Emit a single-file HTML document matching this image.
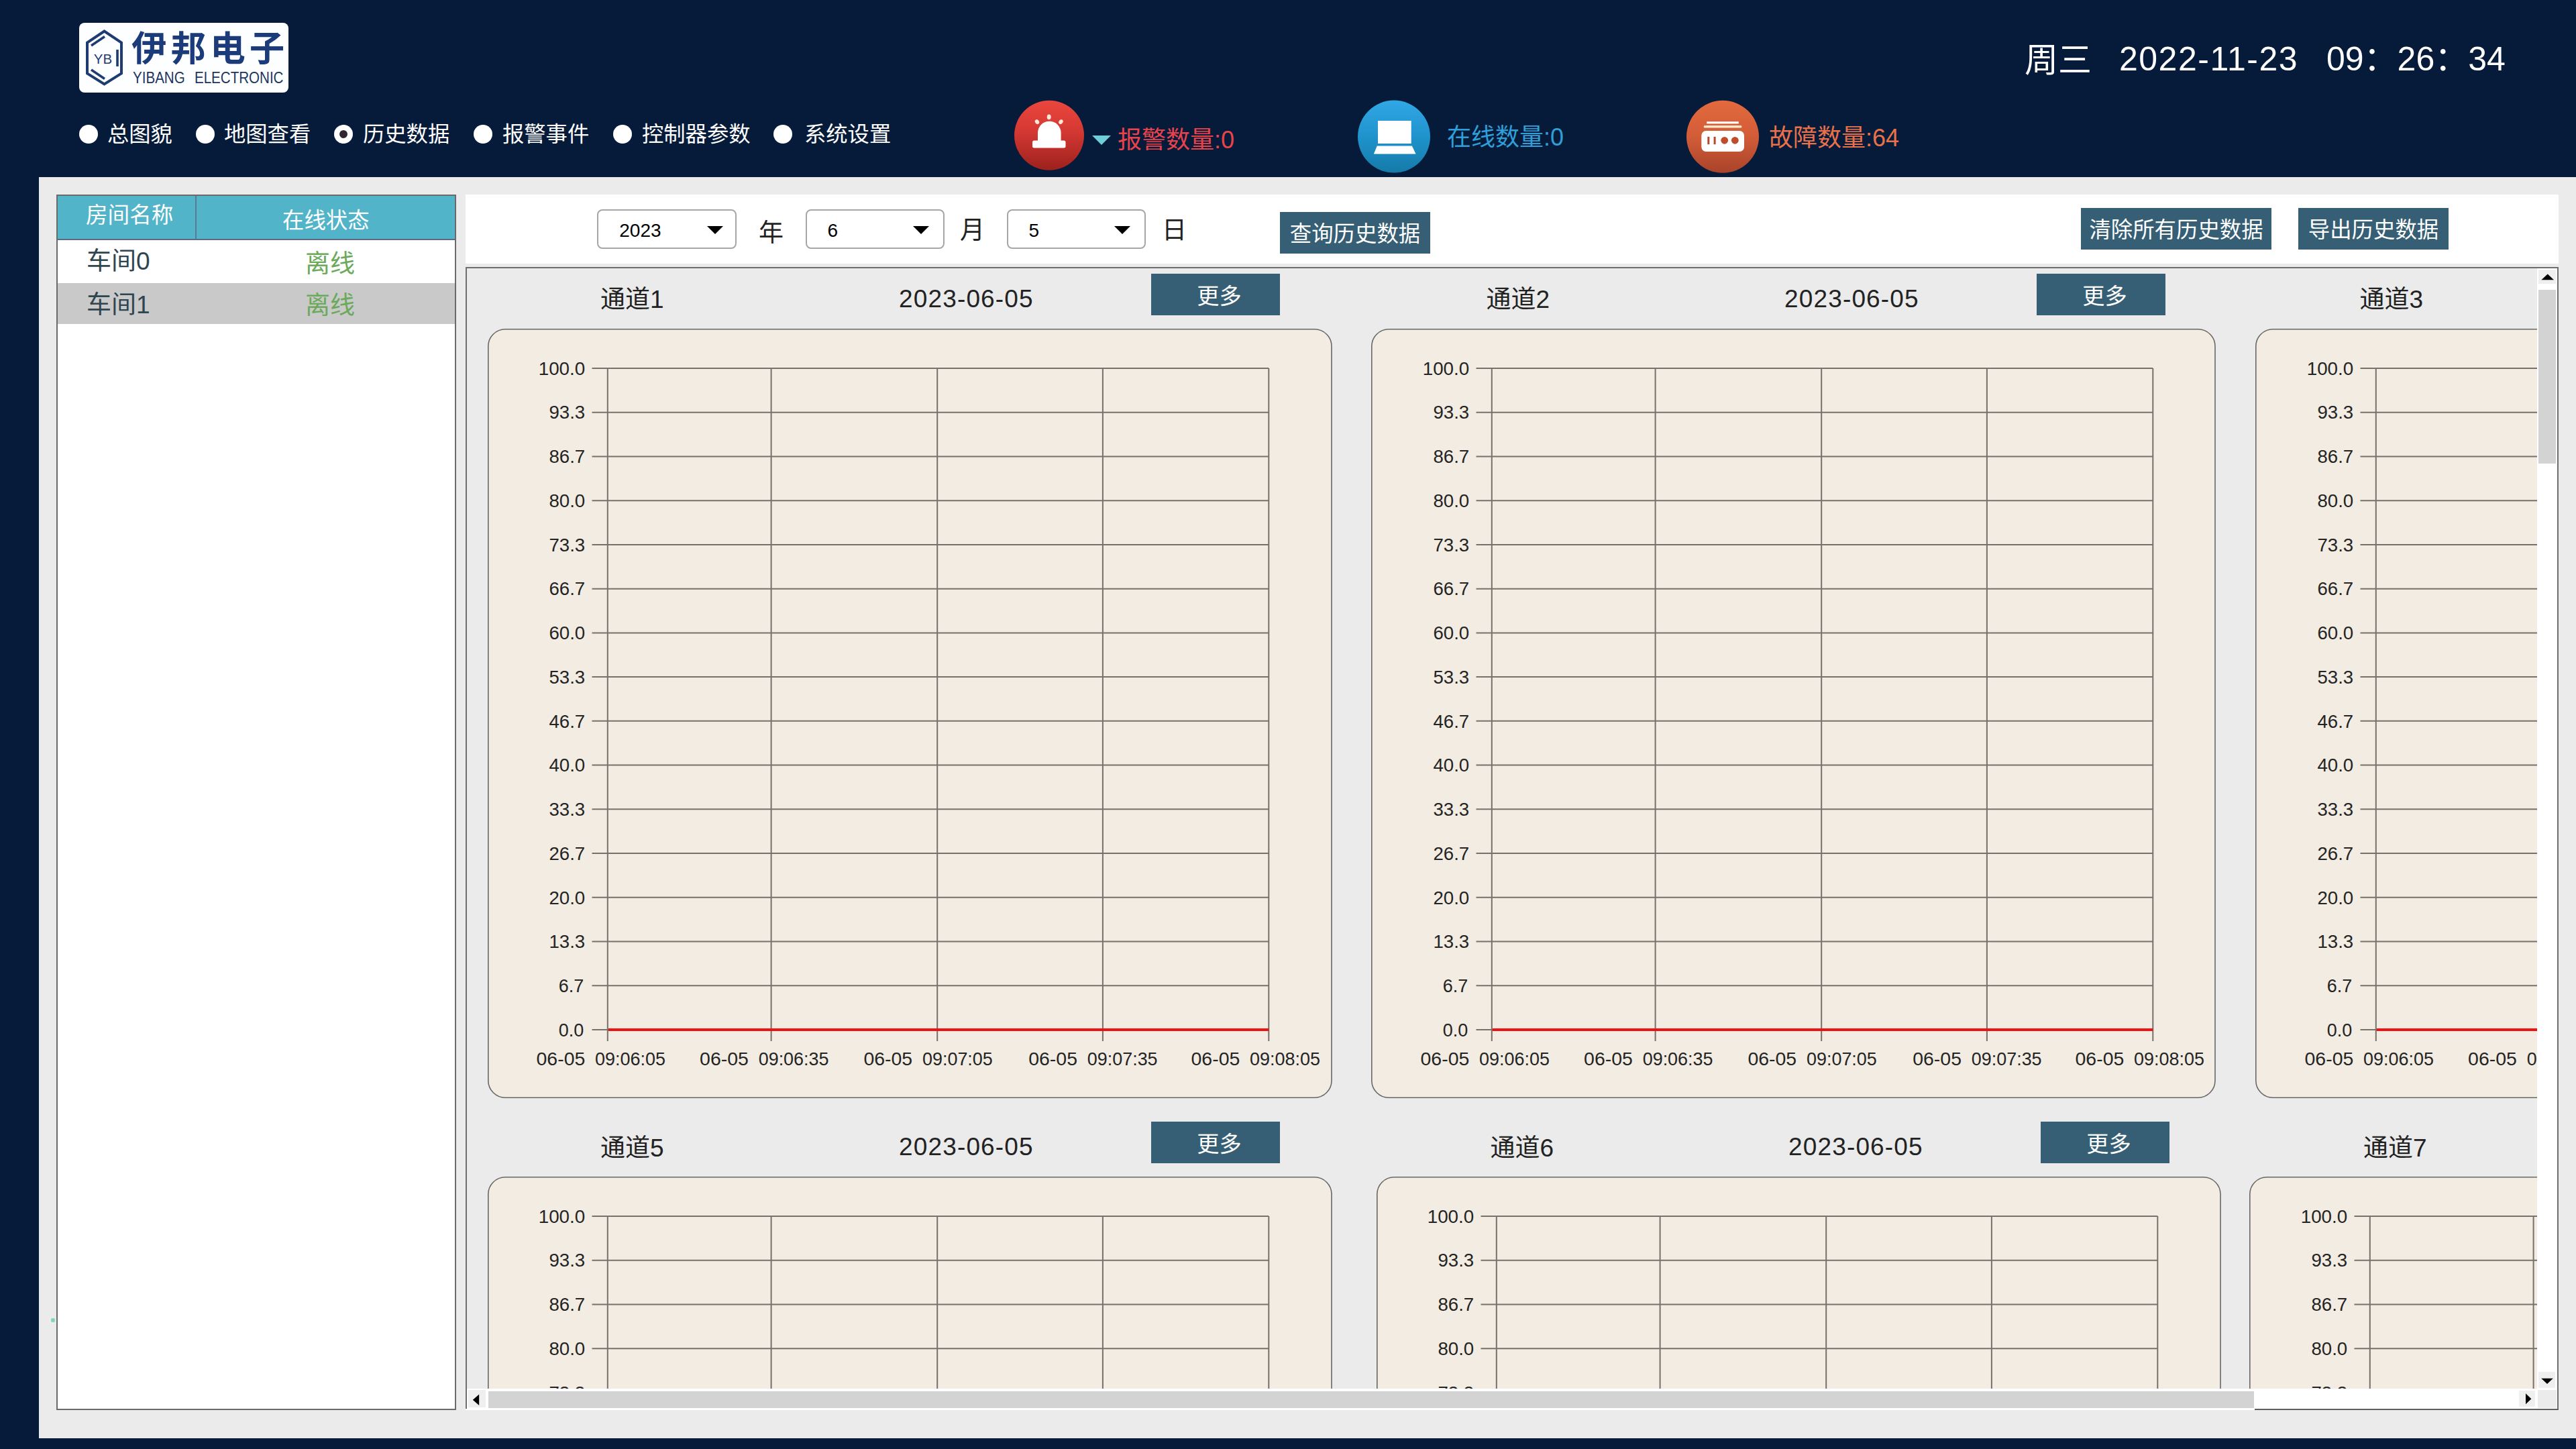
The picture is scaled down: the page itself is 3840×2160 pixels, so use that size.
<!DOCTYPE html>
<html lang="zh-CN"><head><meta charset="utf-8"><title>历史数据</title>
<style>
html,body{margin:0;padding:0}
body{width:3840px;height:2160px;background:#061b3a;position:relative;overflow:hidden;font-family:"Liberation Sans","Noto Sans CJK SC",sans-serif;}
.a{position:absolute;white-space:pre;line-height:1}
.nav{color:#fff;font-size:32.3px}
.radio{position:absolute;width:28px;height:28px;border-radius:50%;background:#fff}
.radio.on::after{content:"";position:absolute;left:8px;top:8px;width:12px;height:12px;border-radius:50%;background:#2f2730}
.btn{position:absolute;background:#365f75;color:#fff;font-size:32px;text-align:center}
.sel{position:absolute;box-sizing:border-box;border:2px solid #a6a6a6;border-radius:8px;background:#fff;width:207.5px;height:59px;top:312px}
.sel span{position:absolute;left:31px;top:14px;font-size:28px;line-height:32px;color:#000}
.sel i{position:absolute;right:18px;top:23px;width:0;height:0;border-left:12px solid transparent;border-right:12px solid transparent;border-top:12px solid #000}
.tl{color:#222;font-size:37px}
.panel{position:absolute;box-sizing:border-box;width:1259px;height:1147px;background:#f2ece2;border:2px solid #6c6c6c;border-radius:26px}
svg text{font-family:"Liberation Sans","Noto Sans CJK SC",sans-serif;}
</style></head><body>

<div class="a" style="left:118px;top:34px;width:312px;height:104px;background:#fdfeff;border-radius:8px"></div>
<svg class="a" style="left:118px;top:34px" width="312" height="104" viewBox="118 34 312 104">
<polygon points="155.5,46.5 181,63.5 181,109.5 155.5,125.5 130,109.5 130,63.5" fill="none" stroke="#1e3c72" stroke-width="4"/>
<line x1="136" y1="68" x2="156" y2="54.5" stroke="#1e3c72" stroke-width="3.6"/>
<line x1="175" y1="74" x2="175" y2="99" stroke="#1e3c72" stroke-width="3.6"/>
<line x1="136" y1="104" x2="156" y2="117.5" stroke="#1e3c72" stroke-width="3.6"/>
<text x="153.5" y="94.8" font-size="20.5" text-anchor="middle" fill="#1e3c72" letter-spacing="0">YB</text>
</svg>
<div class="a" style="left:196px;top:44.5px;font-size:52.5px;font-weight:700;color:#1b3b7a;letter-spacing:6.1px;line-height:56px">伊邦电子</div>
<div class="a" style="left:198px;top:102.5px;font-size:23.5px;color:#22355e;line-height:26px;word-spacing:1.6px;transform:scaleX(0.875);transform-origin:0 0">YIBANG  ELECTRONIC</div>
<div class="a" style="left:3018px;top:62px;font-size:50px;color:#fff;line-height:56px">周三</div>
<div class="a" style="left:3159px;top:60px;font-size:50px;color:#fff;line-height:56px;letter-spacing:1.5px">2022-11-23</div>
<div class="a" style="left:3468px;top:60px;font-size:50px;color:#fff;line-height:56px">09：26：34</div>
<div class="radio" style="left:118px;top:186px"></div>
<div class="a nav" style="left:160px;top:181px;line-height:38px">总图貌</div>
<div class="radio" style="left:292px;top:186px"></div>
<div class="a nav" style="left:334px;top:181px;line-height:38px">地图查看</div>
<div class="radio on" style="left:498px;top:186px"></div>
<div class="a nav" style="left:541px;top:181px;line-height:38px">历史数据</div>
<div class="radio" style="left:706px;top:186px"></div>
<div class="a nav" style="left:749px;top:181px;line-height:38px">报警事件</div>
<div class="radio" style="left:914px;top:186px"></div>
<div class="a nav" style="left:957px;top:181px;line-height:38px">控制器参数</div>
<div class="radio" style="left:1153px;top:186px"></div>
<div class="a nav" style="left:1199px;top:181px;line-height:38px">系统设置</div>
<svg class="a" style="left:1500px;top:140px" width="1400" height="124" viewBox="1500 140 1400 124">
<defs>
<linearGradient id="gr" x1="0" y1="0" x2="0" y2="1"><stop offset="0" stop-color="#ea463d"/><stop offset="0.45" stop-color="#d43833"/><stop offset="1" stop-color="#9c211d"/></linearGradient>
<linearGradient id="gb" x1="0" y1="0" x2="0" y2="1"><stop offset="0" stop-color="#31a7e6"/><stop offset="0.5" stop-color="#1f93cc"/><stop offset="1" stop-color="#157aa8"/></linearGradient>
<linearGradient id="go" x1="0" y1="0" x2="0" y2="1"><stop offset="0" stop-color="#e36a3e"/><stop offset="0.5" stop-color="#d25c38"/><stop offset="1" stop-color="#a9432a"/></linearGradient>
</defs>
<circle cx="1564" cy="201.8" r="52" fill="url(#gr)"/>
<path d="M1547 210 V198 a17.3 17.3 0 0 1 34.6 0 V210 Z" fill="#fff"/>
<rect x="1539" y="209.5" width="49.5" height="11" rx="2.5" fill="#fff"/>
<ellipse cx="1563.7" cy="174.3" rx="3" ry="3.9" fill="#ffe9d6"/>
<ellipse cx="1546" cy="181.6" rx="2.9" ry="3.7" transform="rotate(-38 1546 181.6)" fill="#ffe9d6"/>
<ellipse cx="1581.4" cy="181.6" rx="2.9" ry="3.7" transform="rotate(38 1581.4 181.6)" fill="#ffe9d6"/>
<polygon points="1628,202 1656,202 1642,216" fill="#6ecfd8"/>
<circle cx="2078" cy="203.6" r="54" fill="url(#gb)"/>
<rect x="2054" y="180" width="49.7" height="34" fill="#fff"/>
<polygon points="2052.8,217.4 2104.8,217.4 2110.6,229.4 2047.8,229.4" fill="#fff"/>
<circle cx="2568" cy="203.8" r="54" fill="url(#go)"/>
<rect x="2544.3" y="181.2" width="47.4" height="3.2" fill="#fff"/>
<rect x="2539.7" y="187" width="56.7" height="3.6" rx="1.5" fill="#fde9cc"/>
<rect x="2536.3" y="195" width="63.7" height="31" rx="7" fill="#fff"/>
<rect x="2545.3" y="203.8" width="3" height="11.4" fill="#b8492d"/>
<rect x="2554.6" y="203.8" width="3" height="11.4" fill="#b8492d"/>
<circle cx="2570.7" cy="209.3" r="5.4" fill="#c04c2e"/>
<circle cx="2586.3" cy="209.3" r="5.4" fill="#c04c2e"/>
</svg>
<div class="a" style="left:1666px;top:187px;font-size:36px;color:#e8434a;line-height:44px">报警数量:0</div>
<div class="a" style="left:2157px;top:183px;font-size:36px;color:#2e9fd8;line-height:44px">在线数量:0</div>
<div class="a" style="left:2637px;top:183.5px;font-size:36px;color:#e8714a;line-height:44px">故障数量:64</div>
<div class="a" style="left:58px;top:264px;width:3782px;height:1880px;background:#ebebeb"></div>
<div class="a" style="left:84px;top:290px;width:596px;height:1812px;background:#fff;border:2px solid #6a6a6a;box-sizing:border-box"></div>
<div class="a" style="left:86px;top:292px;width:592px;height:64px;background:#52b4c9;border-bottom:2px solid #5b6b86"></div>
<div class="a" style="left:291px;top:292px;width:2px;height:64px;background:#5b7a92"></div>
<div class="a" style="left:128px;top:301px;font-size:32.6px;color:#fff;line-height:40px">房间名称</div>
<div class="a" style="left:421px;top:308.5px;font-size:32.4px;color:#fff;line-height:40px">在线状态</div>
<div class="a" style="left:86px;top:422px;width:592px;height:61px;background:#c9c9c9"></div>
<div class="a" style="left:129px;top:365.5px;font-size:37px;color:#2f4550;line-height:48px">车间0</div>
<div class="a" style="left:455px;top:370px;font-size:37px;color:#6aaa5a;line-height:48px">离线</div>
<div class="a" style="left:129px;top:431px;font-size:37px;color:#2f4550;line-height:48px">车间1</div>
<div class="a" style="left:455px;top:432px;font-size:37px;color:#6aaa5a;line-height:48px">离线</div>
<div class="a" style="left:76px;top:1965px;width:6px;height:6px;background:#7fd6c2;border-radius:2px"></div>
<div class="a" style="left:694px;top:290px;width:3120px;height:103px;background:#fff"></div>
<div class="sel" style="left:890.3px"><span>2023</span><i style="right:18.0px"></i></div>
<div class="sel" style="left:1200.5px"><span>6</span><i style="right:21.5px"></i></div>
<div class="sel" style="left:1500.6px"><span>5</span><i style="right:21.5px"></i></div>
<div class="a" style="left:1131px;top:324.3px;font-size:37px;color:#222;line-height:48px">年</div>
<div class="a" style="left:1431px;top:320.3px;font-size:37px;color:#222;line-height:48px">月</div>
<div class="a" style="left:1732px;top:320.3px;font-size:37px;color:#222;line-height:48px">日</div>
<div class="btn" style="left:1908px;top:316px;width:224px;height:62px;line-height:67px;font-size:32.4px">查询历史数据</div>
<div class="btn" style="left:3102px;top:310px;width:284px;height:62px;line-height:67px;font-size:32.4px">清除所有历史数据</div>
<div class="btn" style="left:3426px;top:310px;width:224px;height:62px;line-height:67px;font-size:32.4px">导出历史数据</div>
<div class="a" style="left:694px;top:398px;width:3120px;height:1704px;background:#fff"></div>
<div class="a" style="left:694px;top:398px;width:3120px;height:2px;background:#6e6e6e"></div>
<div class="a" style="left:694px;top:398px;width:2px;height:1702px;background:#6e6e6e"></div>
<div class="a" style="left:3812px;top:398px;width:2px;height:1704px;background:#6e6e6e"></div>
<div class="a" style="left:3361px;top:2099.5px;width:453px;height:2.2px;background:#5e5e5e"></div>
<div class="a" style="left:696px;top:400px;width:3086px;height:1670px;overflow:hidden;background:#ebebeb">
<div class="a tl" style="left:199.0px;top:23.3px;line-height:48px">通道1</div>
<div class="a tl" style="left:644.0px;top:21.8px;line-height:48px;letter-spacing:1.15px">2023-06-05</div>
<div class="btn" style="left:1020.0px;top:7.8px;width:192px;height:62px;line-height:67px;box-sizing:border-box;padding-left:11px;font-size:33.2px">更多</div>
<div class="a tl" style="left:1519.5px;top:23.3px;line-height:48px">通道2</div>
<div class="a tl" style="left:1964.0px;top:21.8px;line-height:48px;letter-spacing:1.15px">2023-06-05</div>
<div class="btn" style="left:2340.0px;top:7.8px;width:192px;height:62px;line-height:67px;box-sizing:border-box;padding-left:11px;font-size:33.2px">更多</div>
<div class="a tl" style="left:2821.5px;top:23.3px;line-height:48px">通道3</div>
<div class="a tl" style="left:4204.0px;top:21.8px;line-height:48px;letter-spacing:1.15px">2023-06-05</div>
<div class="btn" style="left:4204.0px;top:7.8px;width:192px;height:62px;line-height:67px;box-sizing:border-box;padding-left:11px;font-size:33.2px">更多</div>
<div class="a tl" style="left:199.0px;top:1287.5px;line-height:48px">通道5</div>
<div class="a tl" style="left:644.0px;top:1286.0px;line-height:48px;letter-spacing:1.15px">2023-06-05</div>
<div class="btn" style="left:1020.0px;top:1272.0px;width:192px;height:62px;line-height:67px;box-sizing:border-box;padding-left:11px;font-size:33.2px">更多</div>
<div class="a tl" style="left:1525.5px;top:1287.5px;line-height:48px">通道6</div>
<div class="a tl" style="left:1970.0px;top:1286.0px;line-height:48px;letter-spacing:1.15px">2023-06-05</div>
<div class="btn" style="left:2346.0px;top:1272.0px;width:192px;height:62px;line-height:67px;box-sizing:border-box;padding-left:11px;font-size:33.2px">更多</div>
<div class="a tl" style="left:2827.0px;top:1287.5px;line-height:48px">通道7</div>
<div class="a tl" style="left:4204.0px;top:1286.0px;line-height:48px;letter-spacing:1.15px">2023-06-05</div>
<div class="btn" style="left:4204.0px;top:1272.0px;width:192px;height:62px;line-height:67px;box-sizing:border-box;padding-left:11px;font-size:33.2px">更多</div>
<svg class="a" style="left:30.8px;top:90.4px" width="1259" height="1147"><rect x="0.8" y="0.8" width="1257.2" height="1145.4" rx="25.5" fill="#f2ece2" stroke="#686868" stroke-width="1.6"/></svg>
<svg class="a" style="left:31.0px;top:90.7px" width="1259" height="1147" viewBox="0 0 1259 1147">
<path d="M155.5 58.0H1164.3M155.5 123.7H1164.3M155.5 189.5H1164.3M155.5 255.2H1164.3M155.5 320.9H1164.3M155.5 386.7H1164.3M155.5 452.4H1164.3M155.5 518.1H1164.3M155.5 583.8H1164.3M155.5 649.6H1164.3M155.5 715.3H1164.3M155.5 781.0H1164.3M155.5 846.8H1164.3M155.5 912.5H1164.3M155.5 978.2H1164.3M155.5 1044.0H1164.3M178.8 58.0V1061.0M422.6 58.0V1061.0M670.2 58.0V1061.0M916.9 58.0V1061.0M1164.3 58.0V1061.0" stroke="#77716b" stroke-width="2" fill="none"/>
<line x1="179.8" y1="1044.0" x2="1164.3" y2="1044.0" stroke="#ee1212" stroke-width="4"/>
<g font-size="27.5" fill="#242424" text-anchor="end" lengthAdjust="spacingAndGlyphs">
<text x="145.2" y="67.7" textLength="69.5" lengthAdjust="spacingAndGlyphs">100.0</text>
<text x="145.2" y="133.4" textLength="53.8" lengthAdjust="spacingAndGlyphs">93.3</text>
<text x="145.2" y="199.2" textLength="53.8" lengthAdjust="spacingAndGlyphs">86.7</text>
<text x="145.2" y="264.9" textLength="53.8" lengthAdjust="spacingAndGlyphs">80.0</text>
<text x="145.2" y="330.6" textLength="53.8" lengthAdjust="spacingAndGlyphs">73.3</text>
<text x="145.2" y="396.4" textLength="53.8" lengthAdjust="spacingAndGlyphs">66.7</text>
<text x="145.2" y="462.1" textLength="53.8" lengthAdjust="spacingAndGlyphs">60.0</text>
<text x="145.2" y="527.8" textLength="53.8" lengthAdjust="spacingAndGlyphs">53.3</text>
<text x="145.2" y="593.5" textLength="53.8" lengthAdjust="spacingAndGlyphs">46.7</text>
<text x="145.2" y="659.3" textLength="53.8" lengthAdjust="spacingAndGlyphs">40.0</text>
<text x="145.2" y="725.0" textLength="53.8" lengthAdjust="spacingAndGlyphs">33.3</text>
<text x="145.2" y="790.7" textLength="53.8" lengthAdjust="spacingAndGlyphs">26.7</text>
<text x="145.2" y="856.5" textLength="53.8" lengthAdjust="spacingAndGlyphs">20.0</text>
<text x="145.2" y="922.2" textLength="53.8" lengthAdjust="spacingAndGlyphs">13.3</text>
<text x="143.2" y="987.9" textLength="37.5" lengthAdjust="spacingAndGlyphs">6.7</text>
<text x="143.2" y="1053.7" textLength="37.5" lengthAdjust="spacingAndGlyphs">0.0</text>
</g>
<g font-size="27" fill="#242424" xml:space="preserve">
<text x="72.5" y="1096.6" textLength="72.8" lengthAdjust="spacingAndGlyphs">06-05</text><text x="160.1" y="1096.6" textLength="104.8" lengthAdjust="spacingAndGlyphs">09:06:05</text>
<text x="316.1" y="1096.6" textLength="72.8" lengthAdjust="spacingAndGlyphs">06-05</text><text x="403.7" y="1096.6" textLength="104.8" lengthAdjust="spacingAndGlyphs">09:06:35</text>
<text x="560.4" y="1096.6" textLength="72.8" lengthAdjust="spacingAndGlyphs">06-05</text><text x="648.0" y="1096.6" textLength="104.8" lengthAdjust="spacingAndGlyphs">09:07:05</text>
<text x="806.2" y="1096.6" textLength="72.8" lengthAdjust="spacingAndGlyphs">06-05</text><text x="893.8" y="1096.6" textLength="104.8" lengthAdjust="spacingAndGlyphs">09:07:35</text>
<text x="1048.5" y="1096.6" textLength="72.8" lengthAdjust="spacingAndGlyphs">06-05</text><text x="1136.1" y="1096.6" textLength="104.8" lengthAdjust="spacingAndGlyphs">09:08:05</text>
</g></svg>
<svg class="a" style="left:1348.0px;top:90.4px" width="1259" height="1147"><rect x="0.8" y="0.8" width="1257.2" height="1145.4" rx="25.5" fill="#f2ece2" stroke="#686868" stroke-width="1.6"/></svg>
<svg class="a" style="left:1349.0px;top:90.7px" width="1259" height="1147" viewBox="0 0 1259 1147">
<path d="M155.5 58.0H1164.3M155.5 123.7H1164.3M155.5 189.5H1164.3M155.5 255.2H1164.3M155.5 320.9H1164.3M155.5 386.7H1164.3M155.5 452.4H1164.3M155.5 518.1H1164.3M155.5 583.8H1164.3M155.5 649.6H1164.3M155.5 715.3H1164.3M155.5 781.0H1164.3M155.5 846.8H1164.3M155.5 912.5H1164.3M155.5 978.2H1164.3M155.5 1044.0H1164.3M178.8 58.0V1061.0M422.6 58.0V1061.0M670.2 58.0V1061.0M916.9 58.0V1061.0M1164.3 58.0V1061.0" stroke="#77716b" stroke-width="2" fill="none"/>
<line x1="179.8" y1="1044.0" x2="1164.3" y2="1044.0" stroke="#ee1212" stroke-width="4"/>
<g font-size="27.5" fill="#242424" text-anchor="end" lengthAdjust="spacingAndGlyphs">
<text x="145.2" y="67.7" textLength="69.5" lengthAdjust="spacingAndGlyphs">100.0</text>
<text x="145.2" y="133.4" textLength="53.8" lengthAdjust="spacingAndGlyphs">93.3</text>
<text x="145.2" y="199.2" textLength="53.8" lengthAdjust="spacingAndGlyphs">86.7</text>
<text x="145.2" y="264.9" textLength="53.8" lengthAdjust="spacingAndGlyphs">80.0</text>
<text x="145.2" y="330.6" textLength="53.8" lengthAdjust="spacingAndGlyphs">73.3</text>
<text x="145.2" y="396.4" textLength="53.8" lengthAdjust="spacingAndGlyphs">66.7</text>
<text x="145.2" y="462.1" textLength="53.8" lengthAdjust="spacingAndGlyphs">60.0</text>
<text x="145.2" y="527.8" textLength="53.8" lengthAdjust="spacingAndGlyphs">53.3</text>
<text x="145.2" y="593.5" textLength="53.8" lengthAdjust="spacingAndGlyphs">46.7</text>
<text x="145.2" y="659.3" textLength="53.8" lengthAdjust="spacingAndGlyphs">40.0</text>
<text x="145.2" y="725.0" textLength="53.8" lengthAdjust="spacingAndGlyphs">33.3</text>
<text x="145.2" y="790.7" textLength="53.8" lengthAdjust="spacingAndGlyphs">26.7</text>
<text x="145.2" y="856.5" textLength="53.8" lengthAdjust="spacingAndGlyphs">20.0</text>
<text x="145.2" y="922.2" textLength="53.8" lengthAdjust="spacingAndGlyphs">13.3</text>
<text x="143.2" y="987.9" textLength="37.5" lengthAdjust="spacingAndGlyphs">6.7</text>
<text x="143.2" y="1053.7" textLength="37.5" lengthAdjust="spacingAndGlyphs">0.0</text>
</g>
<g font-size="27" fill="#242424" xml:space="preserve">
<text x="72.5" y="1096.6" textLength="72.8" lengthAdjust="spacingAndGlyphs">06-05</text><text x="160.1" y="1096.6" textLength="104.8" lengthAdjust="spacingAndGlyphs">09:06:05</text>
<text x="316.1" y="1096.6" textLength="72.8" lengthAdjust="spacingAndGlyphs">06-05</text><text x="403.7" y="1096.6" textLength="104.8" lengthAdjust="spacingAndGlyphs">09:06:35</text>
<text x="560.4" y="1096.6" textLength="72.8" lengthAdjust="spacingAndGlyphs">06-05</text><text x="648.0" y="1096.6" textLength="104.8" lengthAdjust="spacingAndGlyphs">09:07:05</text>
<text x="806.2" y="1096.6" textLength="72.8" lengthAdjust="spacingAndGlyphs">06-05</text><text x="893.8" y="1096.6" textLength="104.8" lengthAdjust="spacingAndGlyphs">09:07:35</text>
<text x="1048.5" y="1096.6" textLength="72.8" lengthAdjust="spacingAndGlyphs">06-05</text><text x="1136.1" y="1096.6" textLength="104.8" lengthAdjust="spacingAndGlyphs">09:08:05</text>
</g></svg>
<svg class="a" style="left:2665.5px;top:90.4px" width="1259" height="1147"><rect x="0.8" y="0.8" width="1257.2" height="1145.4" rx="25.5" fill="#f2ece2" stroke="#686868" stroke-width="1.6"/></svg>
<svg class="a" style="left:2666.6px;top:90.7px" width="1259" height="1147" viewBox="0 0 1259 1147">
<path d="M155.5 58.0H1164.3M155.5 123.7H1164.3M155.5 189.5H1164.3M155.5 255.2H1164.3M155.5 320.9H1164.3M155.5 386.7H1164.3M155.5 452.4H1164.3M155.5 518.1H1164.3M155.5 583.8H1164.3M155.5 649.6H1164.3M155.5 715.3H1164.3M155.5 781.0H1164.3M155.5 846.8H1164.3M155.5 912.5H1164.3M155.5 978.2H1164.3M155.5 1044.0H1164.3M178.8 58.0V1061.0M422.6 58.0V1061.0M670.2 58.0V1061.0M916.9 58.0V1061.0M1164.3 58.0V1061.0" stroke="#77716b" stroke-width="2" fill="none"/>
<line x1="179.8" y1="1044.0" x2="1164.3" y2="1044.0" stroke="#ee1212" stroke-width="4"/>
<g font-size="27.5" fill="#242424" text-anchor="end" lengthAdjust="spacingAndGlyphs">
<text x="145.2" y="67.7" textLength="69.5" lengthAdjust="spacingAndGlyphs">100.0</text>
<text x="145.2" y="133.4" textLength="53.8" lengthAdjust="spacingAndGlyphs">93.3</text>
<text x="145.2" y="199.2" textLength="53.8" lengthAdjust="spacingAndGlyphs">86.7</text>
<text x="145.2" y="264.9" textLength="53.8" lengthAdjust="spacingAndGlyphs">80.0</text>
<text x="145.2" y="330.6" textLength="53.8" lengthAdjust="spacingAndGlyphs">73.3</text>
<text x="145.2" y="396.4" textLength="53.8" lengthAdjust="spacingAndGlyphs">66.7</text>
<text x="145.2" y="462.1" textLength="53.8" lengthAdjust="spacingAndGlyphs">60.0</text>
<text x="145.2" y="527.8" textLength="53.8" lengthAdjust="spacingAndGlyphs">53.3</text>
<text x="145.2" y="593.5" textLength="53.8" lengthAdjust="spacingAndGlyphs">46.7</text>
<text x="145.2" y="659.3" textLength="53.8" lengthAdjust="spacingAndGlyphs">40.0</text>
<text x="145.2" y="725.0" textLength="53.8" lengthAdjust="spacingAndGlyphs">33.3</text>
<text x="145.2" y="790.7" textLength="53.8" lengthAdjust="spacingAndGlyphs">26.7</text>
<text x="145.2" y="856.5" textLength="53.8" lengthAdjust="spacingAndGlyphs">20.0</text>
<text x="145.2" y="922.2" textLength="53.8" lengthAdjust="spacingAndGlyphs">13.3</text>
<text x="143.2" y="987.9" textLength="37.5" lengthAdjust="spacingAndGlyphs">6.7</text>
<text x="143.2" y="1053.7" textLength="37.5" lengthAdjust="spacingAndGlyphs">0.0</text>
</g>
<g font-size="27" fill="#242424" xml:space="preserve">
<text x="72.5" y="1096.6" textLength="72.8" lengthAdjust="spacingAndGlyphs">06-05</text><text x="160.1" y="1096.6" textLength="104.8" lengthAdjust="spacingAndGlyphs">09:06:05</text>
<text x="316.1" y="1096.6" textLength="72.8" lengthAdjust="spacingAndGlyphs">06-05</text><text x="403.7" y="1096.6" textLength="104.8" lengthAdjust="spacingAndGlyphs">09:06:35</text>
<text x="560.4" y="1096.6" textLength="72.8" lengthAdjust="spacingAndGlyphs">06-05</text><text x="648.0" y="1096.6" textLength="104.8" lengthAdjust="spacingAndGlyphs">09:07:05</text>
<text x="806.2" y="1096.6" textLength="72.8" lengthAdjust="spacingAndGlyphs">06-05</text><text x="893.8" y="1096.6" textLength="104.8" lengthAdjust="spacingAndGlyphs">09:07:35</text>
<text x="1048.5" y="1096.6" textLength="72.8" lengthAdjust="spacingAndGlyphs">06-05</text><text x="1136.1" y="1096.6" textLength="104.8" lengthAdjust="spacingAndGlyphs">09:08:05</text>
</g></svg>
<svg class="a" style="left:30.8px;top:1353.7px" width="1259" height="1147"><rect x="0.8" y="0.8" width="1257.2" height="1145.4" rx="25.5" fill="#f2ece2" stroke="#686868" stroke-width="1.6"/></svg>
<svg class="a" style="left:31.0px;top:1354.9px" width="1259" height="1147" viewBox="0 0 1259 1147">
<path d="M155.5 58.0H1164.3M155.5 123.7H1164.3M155.5 189.5H1164.3M155.5 255.2H1164.3M155.5 320.9H1164.3M155.5 386.7H1164.3M155.5 452.4H1164.3M155.5 518.1H1164.3M155.5 583.8H1164.3M155.5 649.6H1164.3M155.5 715.3H1164.3M155.5 781.0H1164.3M155.5 846.8H1164.3M155.5 912.5H1164.3M155.5 978.2H1164.3M155.5 1044.0H1164.3M178.8 58.0V1061.0M422.6 58.0V1061.0M670.2 58.0V1061.0M916.9 58.0V1061.0M1164.3 58.0V1061.0" stroke="#77716b" stroke-width="2" fill="none"/>
<line x1="179.8" y1="1044.0" x2="1164.3" y2="1044.0" stroke="#ee1212" stroke-width="4"/>
<g font-size="27.5" fill="#242424" text-anchor="end" lengthAdjust="spacingAndGlyphs">
<text x="145.2" y="67.7" textLength="69.5" lengthAdjust="spacingAndGlyphs">100.0</text>
<text x="145.2" y="133.4" textLength="53.8" lengthAdjust="spacingAndGlyphs">93.3</text>
<text x="145.2" y="199.2" textLength="53.8" lengthAdjust="spacingAndGlyphs">86.7</text>
<text x="145.2" y="264.9" textLength="53.8" lengthAdjust="spacingAndGlyphs">80.0</text>
<text x="145.2" y="330.6" textLength="53.8" lengthAdjust="spacingAndGlyphs">73.3</text>
<text x="145.2" y="396.4" textLength="53.8" lengthAdjust="spacingAndGlyphs">66.7</text>
<text x="145.2" y="462.1" textLength="53.8" lengthAdjust="spacingAndGlyphs">60.0</text>
<text x="145.2" y="527.8" textLength="53.8" lengthAdjust="spacingAndGlyphs">53.3</text>
<text x="145.2" y="593.5" textLength="53.8" lengthAdjust="spacingAndGlyphs">46.7</text>
<text x="145.2" y="659.3" textLength="53.8" lengthAdjust="spacingAndGlyphs">40.0</text>
<text x="145.2" y="725.0" textLength="53.8" lengthAdjust="spacingAndGlyphs">33.3</text>
<text x="145.2" y="790.7" textLength="53.8" lengthAdjust="spacingAndGlyphs">26.7</text>
<text x="145.2" y="856.5" textLength="53.8" lengthAdjust="spacingAndGlyphs">20.0</text>
<text x="145.2" y="922.2" textLength="53.8" lengthAdjust="spacingAndGlyphs">13.3</text>
<text x="143.2" y="987.9" textLength="37.5" lengthAdjust="spacingAndGlyphs">6.7</text>
<text x="143.2" y="1053.7" textLength="37.5" lengthAdjust="spacingAndGlyphs">0.0</text>
</g>
<g font-size="27" fill="#242424" xml:space="preserve">
<text x="72.5" y="1096.6" textLength="72.8" lengthAdjust="spacingAndGlyphs">06-05</text><text x="160.1" y="1096.6" textLength="104.8" lengthAdjust="spacingAndGlyphs">09:06:05</text>
<text x="316.1" y="1096.6" textLength="72.8" lengthAdjust="spacingAndGlyphs">06-05</text><text x="403.7" y="1096.6" textLength="104.8" lengthAdjust="spacingAndGlyphs">09:06:35</text>
<text x="560.4" y="1096.6" textLength="72.8" lengthAdjust="spacingAndGlyphs">06-05</text><text x="648.0" y="1096.6" textLength="104.8" lengthAdjust="spacingAndGlyphs">09:07:05</text>
<text x="806.2" y="1096.6" textLength="72.8" lengthAdjust="spacingAndGlyphs">06-05</text><text x="893.8" y="1096.6" textLength="104.8" lengthAdjust="spacingAndGlyphs">09:07:35</text>
<text x="1048.5" y="1096.6" textLength="72.8" lengthAdjust="spacingAndGlyphs">06-05</text><text x="1136.1" y="1096.6" textLength="104.8" lengthAdjust="spacingAndGlyphs">09:08:05</text>
</g></svg>
<svg class="a" style="left:1355.6px;top:1353.7px" width="1259" height="1147"><rect x="0.8" y="0.8" width="1257.2" height="1145.4" rx="25.5" fill="#f2ece2" stroke="#686868" stroke-width="1.6"/></svg>
<svg class="a" style="left:1356.4px;top:1354.9px" width="1259" height="1147" viewBox="0 0 1259 1147">
<path d="M155.5 58.0H1164.3M155.5 123.7H1164.3M155.5 189.5H1164.3M155.5 255.2H1164.3M155.5 320.9H1164.3M155.5 386.7H1164.3M155.5 452.4H1164.3M155.5 518.1H1164.3M155.5 583.8H1164.3M155.5 649.6H1164.3M155.5 715.3H1164.3M155.5 781.0H1164.3M155.5 846.8H1164.3M155.5 912.5H1164.3M155.5 978.2H1164.3M155.5 1044.0H1164.3M178.8 58.0V1061.0M422.6 58.0V1061.0M670.2 58.0V1061.0M916.9 58.0V1061.0M1164.3 58.0V1061.0" stroke="#77716b" stroke-width="2" fill="none"/>
<line x1="179.8" y1="1044.0" x2="1164.3" y2="1044.0" stroke="#ee1212" stroke-width="4"/>
<g font-size="27.5" fill="#242424" text-anchor="end" lengthAdjust="spacingAndGlyphs">
<text x="145.2" y="67.7" textLength="69.5" lengthAdjust="spacingAndGlyphs">100.0</text>
<text x="145.2" y="133.4" textLength="53.8" lengthAdjust="spacingAndGlyphs">93.3</text>
<text x="145.2" y="199.2" textLength="53.8" lengthAdjust="spacingAndGlyphs">86.7</text>
<text x="145.2" y="264.9" textLength="53.8" lengthAdjust="spacingAndGlyphs">80.0</text>
<text x="145.2" y="330.6" textLength="53.8" lengthAdjust="spacingAndGlyphs">73.3</text>
<text x="145.2" y="396.4" textLength="53.8" lengthAdjust="spacingAndGlyphs">66.7</text>
<text x="145.2" y="462.1" textLength="53.8" lengthAdjust="spacingAndGlyphs">60.0</text>
<text x="145.2" y="527.8" textLength="53.8" lengthAdjust="spacingAndGlyphs">53.3</text>
<text x="145.2" y="593.5" textLength="53.8" lengthAdjust="spacingAndGlyphs">46.7</text>
<text x="145.2" y="659.3" textLength="53.8" lengthAdjust="spacingAndGlyphs">40.0</text>
<text x="145.2" y="725.0" textLength="53.8" lengthAdjust="spacingAndGlyphs">33.3</text>
<text x="145.2" y="790.7" textLength="53.8" lengthAdjust="spacingAndGlyphs">26.7</text>
<text x="145.2" y="856.5" textLength="53.8" lengthAdjust="spacingAndGlyphs">20.0</text>
<text x="145.2" y="922.2" textLength="53.8" lengthAdjust="spacingAndGlyphs">13.3</text>
<text x="143.2" y="987.9" textLength="37.5" lengthAdjust="spacingAndGlyphs">6.7</text>
<text x="143.2" y="1053.7" textLength="37.5" lengthAdjust="spacingAndGlyphs">0.0</text>
</g>
<g font-size="27" fill="#242424" xml:space="preserve">
<text x="72.5" y="1096.6" textLength="72.8" lengthAdjust="spacingAndGlyphs">06-05</text><text x="160.1" y="1096.6" textLength="104.8" lengthAdjust="spacingAndGlyphs">09:06:05</text>
<text x="316.1" y="1096.6" textLength="72.8" lengthAdjust="spacingAndGlyphs">06-05</text><text x="403.7" y="1096.6" textLength="104.8" lengthAdjust="spacingAndGlyphs">09:06:35</text>
<text x="560.4" y="1096.6" textLength="72.8" lengthAdjust="spacingAndGlyphs">06-05</text><text x="648.0" y="1096.6" textLength="104.8" lengthAdjust="spacingAndGlyphs">09:07:05</text>
<text x="806.2" y="1096.6" textLength="72.8" lengthAdjust="spacingAndGlyphs">06-05</text><text x="893.8" y="1096.6" textLength="104.8" lengthAdjust="spacingAndGlyphs">09:07:35</text>
<text x="1048.5" y="1096.6" textLength="72.8" lengthAdjust="spacingAndGlyphs">06-05</text><text x="1136.1" y="1096.6" textLength="104.8" lengthAdjust="spacingAndGlyphs">09:08:05</text>
</g></svg>
<svg class="a" style="left:2657.4px;top:1353.7px" width="1259" height="1147"><rect x="0.8" y="0.8" width="1257.2" height="1145.4" rx="25.5" fill="#f2ece2" stroke="#686868" stroke-width="1.6"/></svg>
<svg class="a" style="left:2658.4px;top:1354.9px" width="1259" height="1147" viewBox="0 0 1259 1147">
<path d="M155.5 58.0H1164.3M155.5 123.7H1164.3M155.5 189.5H1164.3M155.5 255.2H1164.3M155.5 320.9H1164.3M155.5 386.7H1164.3M155.5 452.4H1164.3M155.5 518.1H1164.3M155.5 583.8H1164.3M155.5 649.6H1164.3M155.5 715.3H1164.3M155.5 781.0H1164.3M155.5 846.8H1164.3M155.5 912.5H1164.3M155.5 978.2H1164.3M155.5 1044.0H1164.3M178.8 58.0V1061.0M422.6 58.0V1061.0M670.2 58.0V1061.0M916.9 58.0V1061.0M1164.3 58.0V1061.0" stroke="#77716b" stroke-width="2" fill="none"/>
<line x1="179.8" y1="1044.0" x2="1164.3" y2="1044.0" stroke="#ee1212" stroke-width="4"/>
<g font-size="27.5" fill="#242424" text-anchor="end" lengthAdjust="spacingAndGlyphs">
<text x="145.2" y="67.7" textLength="69.5" lengthAdjust="spacingAndGlyphs">100.0</text>
<text x="145.2" y="133.4" textLength="53.8" lengthAdjust="spacingAndGlyphs">93.3</text>
<text x="145.2" y="199.2" textLength="53.8" lengthAdjust="spacingAndGlyphs">86.7</text>
<text x="145.2" y="264.9" textLength="53.8" lengthAdjust="spacingAndGlyphs">80.0</text>
<text x="145.2" y="330.6" textLength="53.8" lengthAdjust="spacingAndGlyphs">73.3</text>
<text x="145.2" y="396.4" textLength="53.8" lengthAdjust="spacingAndGlyphs">66.7</text>
<text x="145.2" y="462.1" textLength="53.8" lengthAdjust="spacingAndGlyphs">60.0</text>
<text x="145.2" y="527.8" textLength="53.8" lengthAdjust="spacingAndGlyphs">53.3</text>
<text x="145.2" y="593.5" textLength="53.8" lengthAdjust="spacingAndGlyphs">46.7</text>
<text x="145.2" y="659.3" textLength="53.8" lengthAdjust="spacingAndGlyphs">40.0</text>
<text x="145.2" y="725.0" textLength="53.8" lengthAdjust="spacingAndGlyphs">33.3</text>
<text x="145.2" y="790.7" textLength="53.8" lengthAdjust="spacingAndGlyphs">26.7</text>
<text x="145.2" y="856.5" textLength="53.8" lengthAdjust="spacingAndGlyphs">20.0</text>
<text x="145.2" y="922.2" textLength="53.8" lengthAdjust="spacingAndGlyphs">13.3</text>
<text x="143.2" y="987.9" textLength="37.5" lengthAdjust="spacingAndGlyphs">6.7</text>
<text x="143.2" y="1053.7" textLength="37.5" lengthAdjust="spacingAndGlyphs">0.0</text>
</g>
<g font-size="27" fill="#242424" xml:space="preserve">
<text x="72.5" y="1096.6" textLength="72.8" lengthAdjust="spacingAndGlyphs">06-05</text><text x="160.1" y="1096.6" textLength="104.8" lengthAdjust="spacingAndGlyphs">09:06:05</text>
<text x="316.1" y="1096.6" textLength="72.8" lengthAdjust="spacingAndGlyphs">06-05</text><text x="403.7" y="1096.6" textLength="104.8" lengthAdjust="spacingAndGlyphs">09:06:35</text>
<text x="560.4" y="1096.6" textLength="72.8" lengthAdjust="spacingAndGlyphs">06-05</text><text x="648.0" y="1096.6" textLength="104.8" lengthAdjust="spacingAndGlyphs">09:07:05</text>
<text x="806.2" y="1096.6" textLength="72.8" lengthAdjust="spacingAndGlyphs">06-05</text><text x="893.8" y="1096.6" textLength="104.8" lengthAdjust="spacingAndGlyphs">09:07:35</text>
<text x="1048.5" y="1096.6" textLength="72.8" lengthAdjust="spacingAndGlyphs">06-05</text><text x="1136.1" y="1096.6" textLength="104.8" lengthAdjust="spacingAndGlyphs">09:08:05</text>
</g></svg>
</div>
<div class="a" style="left:3782px;top:400px;width:30px;height:1670px;background:#fff"></div>
<div class="a" style="left:3784.4px;top:402.3px;width:25.4px;height:21px;background:#efefef"></div>
<div class="a" style="left:3784.4px;top:432px;width:25.4px;height:259.4px;background:#d3d3d3"></div>
<div class="a" style="left:3784px;top:2045px;width:25px;height:24px;background:#efefef"></div>
<svg class="a" style="left:3782px;top:400px" width="30" height="1700" viewBox="3782 400 30 1700"><polygon points="3788.4,417.2 3807,417.2 3797.7,408.4"/><polygon points="3788.2,2054.8 3805.8,2054.8 3797,2063"/></svg>
<div class="a" style="left:696px;top:2070px;width:3086px;height:32px;background:#fff"></div>
<div class="a" style="left:698px;top:2072px;width:26px;height:26px;background:#efefef"></div>
<div class="a" style="left:728px;top:2074.2px;width:2632px;height:24.8px;background:#d3d3d3"></div>
<div class="a" style="left:3754.6px;top:2072.5px;width:24px;height:24px;background:#efefef"></div>
<div class="a" style="left:3783px;top:2072px;width:28px;height:26.5px;background:#ebebeb"></div>
<div class="a" style="left:3361px;top:2099.5px;width:453px;height:2.2px;background:#5e5e5e"></div>
<svg class="a" style="left:696px;top:2070px" width="3086" height="30" viewBox="696 2070 3086 30"><polygon points="714.2,2078.6 714.2,2095 704.8,2086.8"/><polygon points="3765,2077.3 3765,2093.3 3773.4,2085.3"/></svg>
</body></html>
